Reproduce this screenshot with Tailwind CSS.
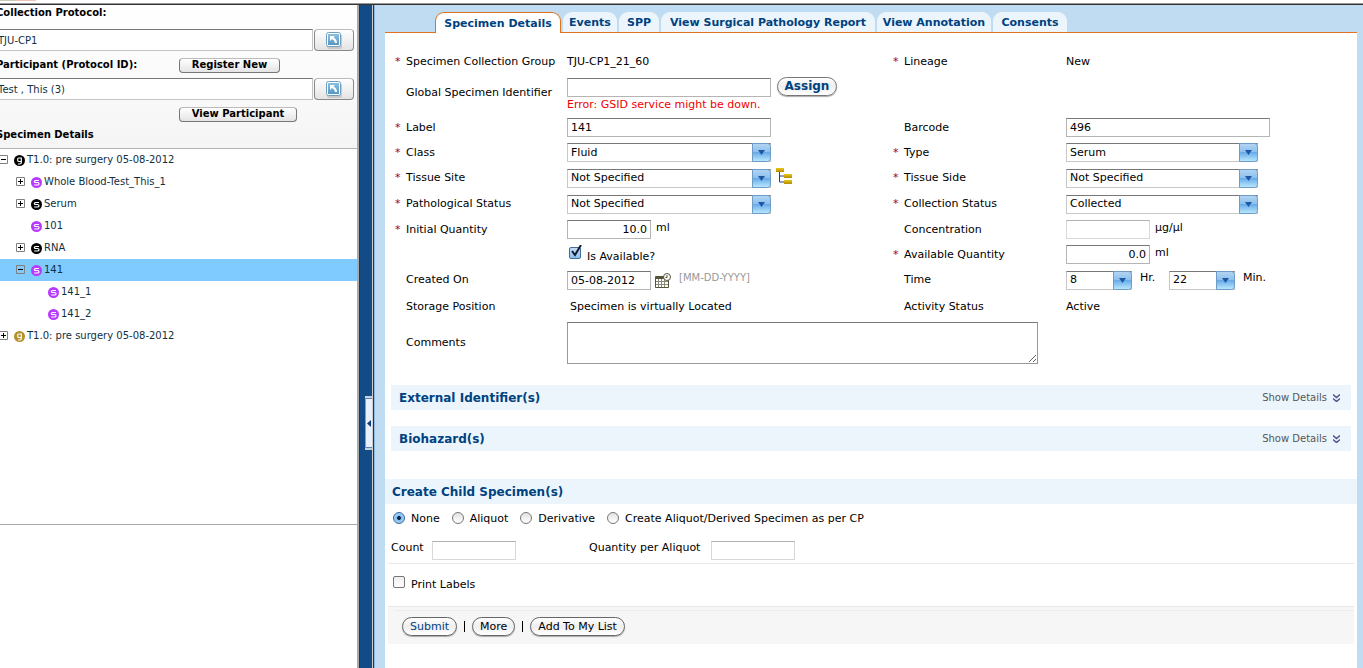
<!DOCTYPE html>
<html lang="en">
<head>
<meta charset="utf-8">
<title>Specimen Details</title>
<script src="https://cdn.jsdelivr.net/npm/@tailwindcss/browser@4"></script>
</head>
<body class="flex min-h-screen flex-col bg-white font-['Verdana','DejaVu_Sans',sans-serif] text-[11px] leading-4 text-black">

<!-- Shared icon shapes -->
<svg class="absolute size-0" aria-hidden="true">
  <defs>
    <linearGradient id="blue-fill" x1="0" y1="0" x2="0" y2="1">
      <stop offset="0" stop-color="#b5d5f2"/><stop offset=".45" stop-color="#8fc0ee"/><stop offset=".5" stop-color="#68abe9"/><stop offset="1" stop-color="#bdeafd"/>
    </linearGradient>
    <linearGradient id="jump-fill" x1="0" y1="0" x2="0" y2="1">
      <stop offset="0" stop-color="#8cbfdc"/><stop offset="1" stop-color="#5597c4"/>
    </linearGradient>
    <linearGradient id="gold-fill" x1="0" y1="0" x2="0" y2="1">
      <stop offset="0" stop-color="#e8c81c"/><stop offset="1" stop-color="#b58a00"/>
    </linearGradient>
  </defs>
  <symbol id="drop" viewBox="0 0 19 19">
    <path d="M.5 .5H15.500Q18.500 .5 18.500 3.500V15.500Q18.500 18.500 15.500 18.500H.5Z" fill="url(#blue-fill)" stroke="#6d9cc9"/>
    <path d="M6 7H13L9.500 12Z" fill="#1d58a5"/>
  </symbol>
  <symbol id="jump" viewBox="0 0 16 17">
    <rect x="1" y="2" width="15" height="15" rx="2" fill="#c9c9c9"/>
    <rect x=".5" y=".5" width="14" height="14" rx="2" fill="#fff" stroke="#6e9fc0"/>
    <rect x="2" y="2" width="11" height="11" fill="url(#jump-fill)"/>
    <path d="M4 4H9L7.500 5.500Q11 7 11 11H9Q9 8.500 6 7L4 9Z" fill="#fff"/>
  </symbol>
  <symbol id="plus" viewBox="0 0 9 9"><path d="M.5 .5H8.500V8.500H.5Z" fill="#fff" stroke="#808080"/><path d="M2 4.500H7M4.500 2V7" stroke="#000"/></symbol>
  <symbol id="minus" viewBox="0 0 9 9"><path d="M.5 .5H8.500V8.500H.5Z" fill="none" stroke="#808080"/><path d="M2 4.500H7" stroke="#000"/></symbol>
  <symbol id="spec" viewBox="0 0 11 11">
    <circle cx="5.500" cy="5.500" r="5.500" fill="currentColor"/>
    <path d="M8 3.500H4.700Q3.300 3.500 3.300 4.500Q3.300 5.500 4.700 5.500H6.500Q8 5.500 8 6.700Q8 8 6.500 8H3.200" fill="none" stroke="#fff" stroke-width="1.200"/>
  </symbol>
  <symbol id="group" viewBox="0 0 11 11">
    <circle cx="5.500" cy="5.500" r="5.500" fill="currentColor"/>
    <path d="M7.300 2.500V7.500Q7.300 9 5.500 9H4M7.300 3H4.800Q3.600 3 3.600 4.800Q3.600 6.500 4.800 6.500H7.300" fill="none" stroke="#fff" stroke-width="1.200"/>
  </symbol>
  <symbol id="more-down" viewBox="0 0 7 8"><path d="M0 .5L3.500 3.500L7 .5M0 4.500L3.500 7.500L7 4.500" fill="none" stroke="#54548f" stroke-width="1.500"/></symbol>
</svg>

<div class="flex h-[5px] items-start border-b border-[#333] bg-white shadow-[inset_0_-1px_0_#999]">
  <span class="h-px w-4 bg-[#c9c9b4]"></span><span class="h-px w-5 bg-[#eec3b6]"></span>
</div>

<div class="flex flex-1">
  <!-- Navigation panel -->
  <aside class="w-[359px] shrink-0 overflow-hidden border-r-2 border-[#aaa] text-[10px]">
    <div class="h-[144px] border-b border-[#b0b3b8] bg-linear-to-b from-white to-[#f5f5f5]">
      <div class="-ml-1">
        <label for="cp" class="block h-6 font-bold">Collection Protocol:</label>
        <div class="flex h-[23px] items-start gap-px">
          <input id="cp" value="TJU-CP1" class="h-[22px] w-[317px] border border-[#c4c4c4] border-t-[#777] bg-white px-px text-[#10303f]">
          <button aria-label="Open collection protocol list" class="flex h-[22px] w-10 items-center justify-center rounded border border-[#888] border-t-[#bbb] bg-linear-to-b from-white to-[#e4e4e4]"><svg class="h-[17px] w-4"><use href="#jump"/></svg></button>
        </div>
        <div class="flex h-[26px] items-center">
          <label for="pt" class="w-[183px] whitespace-nowrap font-bold">Participant (Protocol ID):</label>
          <button class="flex h-[15px] w-[101px] items-center justify-center rounded border border-[#777] border-t-[#bbb] bg-linear-to-b from-white to-[#e4e4e4] font-bold">Register New</button>
        </div>
        <div class="flex h-[23px] items-start gap-px">
          <input id="pt" value="Test , This (3)" class="h-[22px] w-[317px] border border-[#c4c4c4] border-t-[#777] bg-white px-px text-[#10303f]">
          <button aria-label="Open participant list" class="flex h-[22px] w-10 items-center justify-center rounded border border-[#888] border-t-[#bbb] bg-linear-to-b from-white to-[#e4e4e4]"><svg class="h-[17px] w-4"><use href="#jump"/></svg></button>
        </div>
        <div class="flex h-[26px] items-center pl-[183px]">
          <button class="flex h-[15px] w-[118px] items-center justify-center rounded border border-[#777] border-t-[#bbb] bg-linear-to-b from-white to-[#e4e4e4] font-bold">View Participant</button>
        </div>
        <h2 class="font-bold">Specimen Details</h2>
      </div>
    </div>
    <ul class="h-[376px] border-b border-[#aaa] text-[#10303f] [&>li]:flex [&>li]:h-[22px] [&>li]:items-center">
      <li class="-ml-px"><svg class="mr-[6px] mb-px size-[9px]"><use href="#minus"/></svg><svg class="mt-px mr-[2px] size-[11px] text-black"><use href="#group"/></svg>T1.0: pre surgery 05-08-2012</li>
      <li class="pl-4"><svg class="mr-[6px] mb-px size-[9px]"><use href="#plus"/></svg><svg class="mt-px mr-[2px] size-[11px] text-[#b83aff]"><use href="#spec"/></svg>Whole Blood-Test_This_1</li>
      <li class="pl-4"><svg class="mr-[6px] mb-px size-[9px]"><use href="#plus"/></svg><svg class="mt-px mr-[2px] size-[11px] text-black"><use href="#spec"/></svg>Serum</li>
      <li class="pl-[31px]"><svg class="mt-px mr-[2px] size-[11px] text-[#b83aff]"><use href="#spec"/></svg>101</li>
      <li class="pl-4"><svg class="mr-[6px] mb-px size-[9px]"><use href="#plus"/></svg><svg class="mt-px mr-[2px] size-[11px] text-black"><use href="#spec"/></svg>RNA</li>
      <li class="bg-[#7fcbff] pl-4"><svg class="mr-[6px] mb-px size-[9px]"><use href="#minus"/></svg><svg class="mt-px mr-[2px] size-[11px] text-[#b83aff]"><use href="#spec"/></svg>141</li>
      <li class="pl-12"><svg class="mt-px mr-[2px] size-[11px] text-[#b83aff]"><use href="#spec"/></svg>141_1</li>
      <li class="pl-12"><svg class="mt-px mr-[2px] size-[11px] text-[#b83aff]"><use href="#spec"/></svg>141_2</li>
      <li class="-ml-px"><svg class="mr-[6px] mb-px size-[9px]"><use href="#plus"/></svg><svg class="mt-px mr-[2px] size-[11px] text-[#b5912c]"><use href="#group"/></svg>T1.0: pre surgery 05-08-2012</li>
    </ul>
  </aside>

  <!-- Splitter -->
  <div class="flex w-[15px] shrink-0 items-start justify-end border-x border-[#333] bg-[#134b87] pt-[391px] pr-px shadow-[inset_-1px_0_0_#ccc]">
    <button aria-label="Collapse panel" class="flex h-[54px] w-[7px] items-center justify-center border-y-2 border-[#c8d0da] bg-[#e8f0fc] shadow-[inset_1px_0_0_#7d9fd8,inset_0_1px_0_#5b80bb,inset_0_-1px_0_#5b80bb]"><svg viewBox="0 0 4 7" class="h-[7px] w-1"><path d="M4 0V7L0 3.500Z" fill="#123a73"/></svg></button>
  </div>

  <main class="flex min-w-0 flex-1 flex-col border-l border-[#8fb9e0] bg-[#bfdcf2] pr-[6px] pl-[10px]">
    <!-- Tabs -->
    <nav class="flex h-7 items-end gap-[2px] border-b border-[#e2711d] pl-[50px] font-bold text-[#00427f] [&>a]:flex [&>a]:items-center [&>a]:justify-center [&>a]:rounded-t-[9px] [&>a]:pt-[2px] [&>a]:whitespace-nowrap">
      <a href="#details" class="-mb-px h-[21px] w-[126px] border border-b-0 border-[#e2711d] bg-white">Specimen Details</a>
      <a href="#events" class="h-5 w-[54px] bg-[#edf5fc]">Events</a>
      <a href="#spp" class="h-5 w-10 bg-[#edf5fc]">SPP</a>
      <a href="#report" class="h-5 w-[214px] bg-[#edf5fc]">View Surgical Pathology Report</a>
      <a href="#annotation" class="h-5 w-[114px] bg-[#edf5fc]">View Annotation</a>
      <a href="#consents" class="h-5 w-[74px] bg-[#edf5fc]">Consents</a>
    </nav>

    <form class="flex-1 bg-white pt-4
      [&_i]:w-[15px] [&_i]:pl-1 [&_i]:not-italic [&_i]:text-[#b00000]
      [&_select]:h-[19px] [&_select]:w-full [&_select]:appearance-none [&_select]:border [&_select]:border-[#c8c8c8] [&_select]:border-t-[#777] [&_select]:bg-white [&_select]:pl-[3px]">
      <div id="details" class="grid grid-cols-[176px_minmax(0,322fr)_177px_minmax(0,291fr)] grid-rows-[26px_40px_25px_25px_26px_26px_25px_25px_26px_28px_44px] pl-[6px] [&>*]:flex [&>*]:items-center">
        <div><i>*</i>Specimen Collection Group</div>
        <div>TJU-CP1_21_60</div>
        <div><i>*</i>Lineage</div>
        <div>New</div>

        <label for="gsid" class="pb-1"><i></i>Global Specimen Identifier</label>
        <div class="gap-[6px]">
          <div>
            <input id="gsid" class="block h-[19px] w-[204px] border border-[#b5b5b5] border-t-[#777] px-[3px]">
            <p class="leading-[15px] whitespace-nowrap text-[#f00000]">Error: GSID service might be down.</p>
          </div>
          <button type="button" class="mb-[18px] flex h-[19px] w-[60px] items-center justify-center rounded-full border border-[#777] bg-linear-to-b from-white via-[#eee] to-white text-xs font-bold text-[#00427f] shadow-[0_1px_1px_#aaa]">Assign</button>
        </div>
        <div></div><div></div>

        <label for="lbl"><i>*</i>Label</label>
        <div><input id="lbl" value="141" class="h-[19px] w-[204px] border border-[#b5b5b5] border-t-[#777] px-[3px]"></div>
        <label for="bar"><i></i>Barcode</label>
        <div><input id="bar" value="496" class="h-[19px] w-[204px] border border-[#b5b5b5] border-t-[#777] px-[3px]"></div>

        <label for="cls"><i>*</i>Class</label>
        <div><span class="relative flex w-[204px]"><select id="cls"><option>Fluid</option></select><svg class="pointer-events-none absolute right-0 size-[19px]"><use href="#drop"/></svg></span></div>
        <label for="typ"><i>*</i>Type</label>
        <div><span class="relative flex w-[192px]"><select id="typ"><option>Serum</option></select><svg class="pointer-events-none absolute right-0 size-[19px]"><use href="#drop"/></svg></span></div>

        <label for="site"><i>*</i>Tissue Site</label>
        <div class="gap-[5px]"><span class="relative flex w-[204px]"><select id="site"><option>Not Specified</option></select><svg class="pointer-events-none absolute right-0 size-[19px]"><use href="#drop"/></svg></span>
          <button type="button" aria-label="Tissue site tree" class="mb-1"><svg viewBox="0 0 16 16" class="size-4"><path d="M3.500 4V14H8M3.500 8H8" fill="none" stroke="#1c3f94"/><rect width="8" height="4" fill="url(#gold-fill)"/><rect x="8" y="6" width="8" height="4" fill="url(#gold-fill)"/><rect x="8" y="12" width="8" height="4" fill="url(#gold-fill)"/></svg></button></div>
        <label for="side"><i>*</i>Tissue Side</label>
        <div><span class="relative flex w-[192px]"><select id="side"><option>Not Specified</option></select><svg class="pointer-events-none absolute right-0 size-[19px]"><use href="#drop"/></svg></span></div>

        <label for="path"><i>*</i>Pathological Status</label>
        <div><span class="relative flex w-[204px]"><select id="path"><option>Not Specified</option></select><svg class="pointer-events-none absolute right-0 size-[19px]"><use href="#drop"/></svg></span></div>
        <label for="coll"><i>*</i>Collection Status</label>
        <div><span class="relative flex w-[192px]"><select id="coll"><option>Collected</option></select><svg class="pointer-events-none absolute right-0 size-[19px]"><use href="#drop"/></svg></span></div>

        <label for="qty"><i>*</i>Initial Quantity</label>
        <div class="gap-[5px]"><input id="qty" value="10.0" class="h-[19px] w-[84px] border border-[#b5b5b5] border-t-[#777] px-[3px] text-right"><span class="pb-1">ml</span></div>
        <label for="conc"><i></i>Concentration</label>
        <div class="gap-[5px]"><input id="conc" class="h-[19px] w-[84px] border border-[#d8d8d8] border-t-[#b0b0b0] px-[3px]"><span class="pb-1">µg/µl</span></div>

        <div></div>
        <div class="gap-[6px] pl-[2px]">
          <span class="relative mb-1 flex"><input id="avail" type="checkbox" checked class="size-3 appearance-none rounded-xs border border-[#456a96] bg-linear-to-b from-[#c5dcf3] to-[#8cc0ee]"><svg viewBox="0 0 14 14" class="pointer-events-none absolute -top-[2px] left-0 size-[14px]"><path d="M3 6L6 10L12 0" fill="none" stroke="#111b33" stroke-width="2"/></svg></span>
          <label for="avail" class="pt-1">Is Available?</label></div>
        <label for="aq"><i>*</i>Available Quantity</label>
        <div class="gap-[5px]"><input id="aq" value="0.0" class="h-[19px] w-[84px] border border-[#b5b5b5] border-t-[#777] px-[3px] text-right"><span class="pb-1">ml</span></div>

        <label for="date"><i></i>Created On</label>
        <div><input id="date" value="05-08-2012" class="h-[19px] w-[84px] border border-[#b5b5b5] border-t-[#777] px-[3px]">
          <button type="button" aria-label="Pick a date" class="ml-1"><svg viewBox="0 0 16 15" class="h-[15px] w-4"><path d="M.5 3.500H13.500V14.500H.5Z" fill="#fff" stroke="#55523a"/><path d="M1 5H13" stroke="#55523a" stroke-width="2"/><path d="M1 8.500H13M1 11.500H13M3.500 6V14M6.500 6V14M9.500 6V14" stroke="#8b8a78"/><circle cx="12" cy="4" r="3.500" fill="#fff" stroke="#55523a"/><path d="M12 2V4.500H10.500" fill="none" stroke="#55523a"/></svg></button>
          <span class="pb-1 pl-2 text-[10px] text-[#999]">[MM-DD-YYYY]</span></div>
        <label for="hr"><i></i>Time</label>
        <div><span class="relative flex w-[66px]"><select id="hr"><option>8</option></select><svg class="pointer-events-none absolute right-0 size-[19px]"><use href="#drop"/></svg></span>
          <label for="hr" class="w-[37px] pb-1 pl-2">Hr.</label>
          <span class="relative flex w-[66px]"><select id="mn"><option>22</option></select><svg class="pointer-events-none absolute right-0 size-[19px]"><use href="#drop"/></svg></span>
          <label for="mn" class="pb-1 pl-2">Min.</label></div>

        <div><i></i>Storage Position</div>
        <div class="pl-[3px]">Specimen is virtually Located</div>
        <div><i></i>Activity Status</div>
        <div>Active</div>

        <label for="com"><i></i>Comments</label>
        <div class="col-span-3"><textarea id="com" class="h-[42px] w-[471px] max-w-full border border-[#999] border-t-[#777]"></textarea></div>
      </div>

      <section class="mx-[6px] mt-5 flex h-[25px] items-center justify-between bg-[#edf5fc] pr-[11px] pl-2">
        <h2 class="text-xs font-bold text-[#00427f]">External Identifier(s)</h2>
        <a href="#external" class="flex items-center gap-[6px] text-[10px] text-[#555]">Show Details<svg class="h-2 w-[7px]"><use href="#more-down"/></svg></a>
      </section>
      <section class="mx-[6px] mt-4 flex h-[25px] items-center justify-between bg-[#edf5fc] pr-[11px] pl-2">
        <h2 class="text-xs font-bold text-[#00427f]">Biohazard(s)</h2>
        <a href="#biohazard" class="flex items-center gap-[6px] text-[10px] text-[#555]">Show Details<svg class="h-2 w-[7px]"><use href="#more-down"/></svg></a>
      </section>
      <h2 class="mt-7 flex h-[25px] items-center bg-[#edf5fc] pl-[7px] text-xs font-bold text-[#00427f]">Create Child Specimen(s)</h2>

      <div class="mx-[3px] border-b border-[#e8e8e8] pb-[3px]">
        <div class="flex h-[30px] items-center gap-3 pl-[5px] [&>label]:flex [&>label]:items-center [&>label]:gap-[6px] [&_input]:mb-[2px] [&_input]:size-3 [&_input]:shrink-0 [&_input]:appearance-none [&_input]:rounded-full [&_input]:border [&_input]:border-[#777] [&_input]:bg-linear-to-b [&_input]:from-[#e2e2e2] [&_input]:to-white [&_input]:checked:border-[#34659c] [&_input]:checked:bg-[radial-gradient(circle,#0b2748_22%,#86bdf0_32%,#b8e2fb)]">
          <label><input type="radio" name="child" checked>None</label>
          <label><input type="radio" name="child">Aliquot</label>
          <label><input type="radio" name="child">Derivative</label>
          <label><input type="radio" name="child">Create Aliquot/Derived Specimen as per CP</label>
        </div>
        <div class="flex h-[26px] items-end pl-[3px]">
          <label for="cnt" class="w-[41px] pb-1">Count</label>
          <input id="cnt" class="h-[19px] w-[84px] border border-[#d8d8d8] border-t-[#b0b0b0] px-[3px]">
          <label for="qpa" class="ml-[73px] w-[122px] pb-1">Quantity per Aliquot</label>
          <input id="qpa" class="h-[19px] w-[84px] border border-[#d8d8d8] border-t-[#b0b0b0] px-[3px]">
        </div>
      </div>
      <div class="flex h-[42px] items-center gap-[6px] pl-2">
        <input id="print" type="checkbox" class="mb-[6px] size-3 appearance-none rounded-xs border border-[#777] bg-linear-to-b from-[#eee] to-white">
        <label for="print">Print Labels</label>
      </div>
      <footer class="mr-[3px] ml-[3px] h-[38px] border-t border-[#e8e8e8] bg-[#f6f6f6] pt-[3px] pl-[6px]">
        <div class="flex items-center gap-[7px] border-t border-[#ececec] pt-[6px] pl-2 [&>button]:h-[19px] [&>button]:rounded-full [&>button]:border [&>button]:border-[#666] [&>button]:bg-linear-to-b [&>button]:from-white [&>button]:via-[#eee] [&>button]:to-white [&>button]:px-[7px] [&>button]:whitespace-nowrap [&>button]:shadow-[0_1px_1px_#aaa]">
          <button type="button" class="text-[#00427f]">Submit</button>
          <span class="h-[11px] w-px bg-black"></span>
          <button type="button">More</button>
          <span class="h-[11px] w-px bg-black"></span>
          <button type="button">Add To My List</button>
        </div>
      </footer>
    </form>
  </main>
</div>
</body>
</html>
